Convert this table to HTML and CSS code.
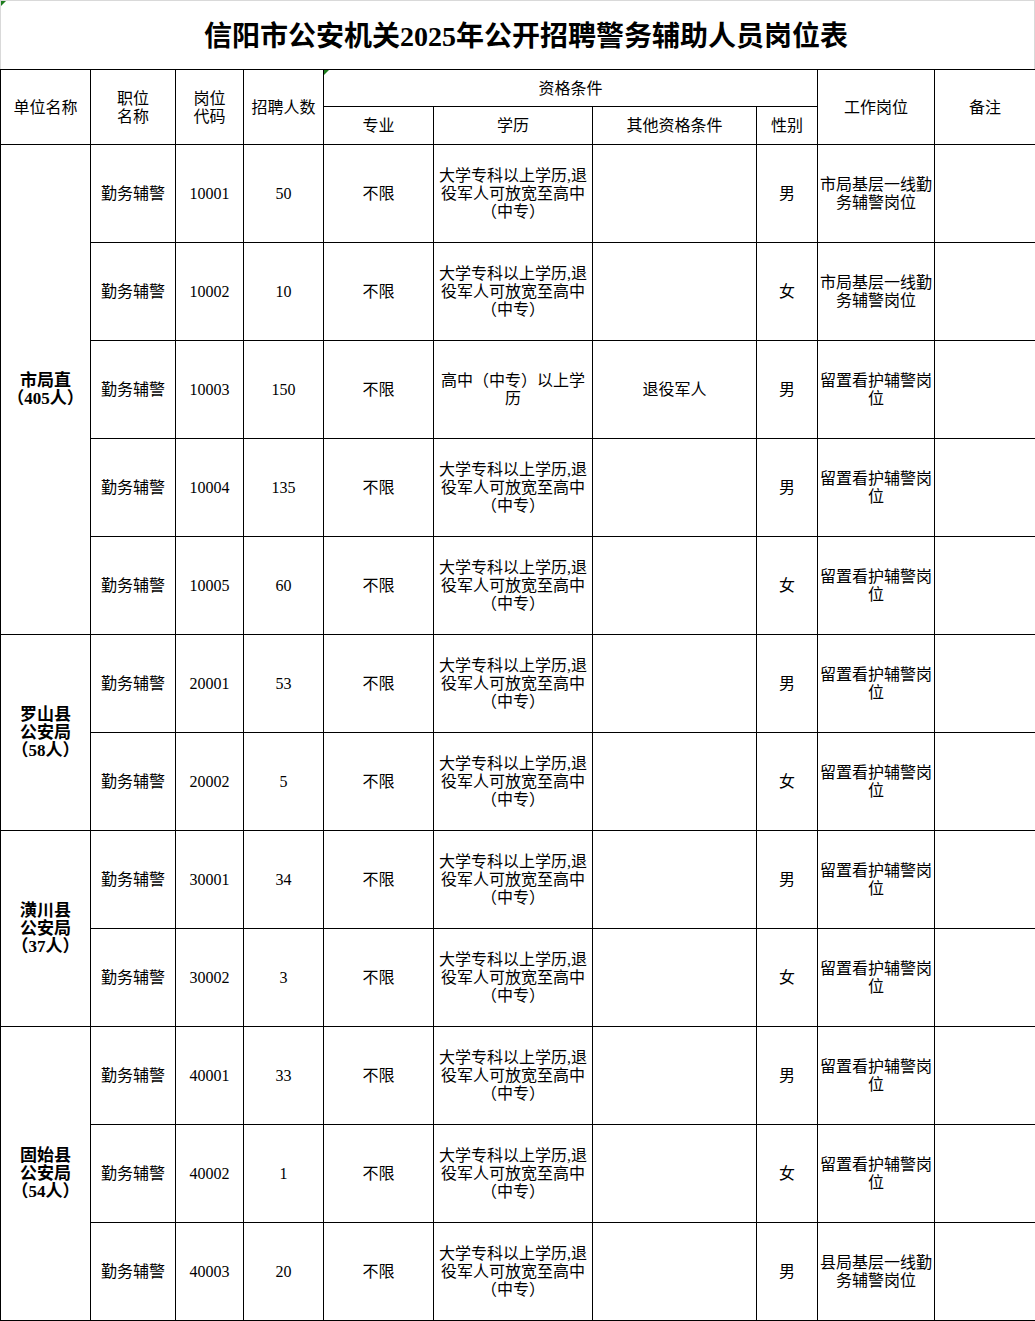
FILE: index.html
```html
<!DOCTYPE html>
<html lang="zh-CN">
<head>
<meta charset="utf-8">
<title>信阳市公安机关2025年公开招聘警务辅助人员岗位表</title>
<link rel="stylesheet" href="styles.css">
</head>
<body>
<div class="sheet">
  <div class="title">
    <span class="mark"></span>
    <h1>信阳市公安机关2025年公开招聘警务辅助人员岗位表</h1>
  </div>
  <table class="grid">
    <colgroup>
      <col class="c1"><col class="c2"><col class="c3"><col class="c4"><col class="c5">
      <col class="c6"><col class="c7"><col class="c8"><col class="c9"><col class="c10">
    </colgroup>
    <thead>
      <tr class="h1row">
        <th rowspan="2">单位名称</th>
        <th rowspan="2">职位<br>名称</th>
        <th rowspan="2">岗位<br>代码</th>
        <th rowspan="2">招聘人数</th>
        <th colspan="4" class="qual"><span class="mark"></span>资格条件</th>
        <th rowspan="2">工作岗位</th>
        <th rowspan="2">备注</th>
      </tr>
      <tr class="h2row">
        <th>专业</th>
        <th>学历</th>
        <th>其他资格条件</th>
        <th>性别</th>
      </tr>
    </thead>
    <tbody>
      <tr>
        <td rowspan="5" class="unit">市局直<br>（405人）</td>
        <td>勤务辅警</td><td>10001</td><td>50</td><td>不限</td>
        <td>大学专科以上学历,退<br>役军人可放宽至高中<br>（中专）</td>
        <td></td><td>男</td><td class="job">市局基层一线勤<br>务辅警岗位</td><td></td>
      </tr>
      <tr>
        <td>勤务辅警</td><td>10002</td><td>10</td><td>不限</td>
        <td>大学专科以上学历,退<br>役军人可放宽至高中<br>（中专）</td>
        <td></td><td>女</td><td class="job">市局基层一线勤<br>务辅警岗位</td><td></td>
      </tr>
      <tr>
        <td>勤务辅警</td><td>10003</td><td>150</td><td>不限</td>
        <td>高中（中专）以上学<br>历</td>
        <td>退役军人</td><td>男</td><td class="job">留置看护辅警岗<br>位</td><td></td>
      </tr>
      <tr>
        <td>勤务辅警</td><td>10004</td><td>135</td><td>不限</td>
        <td>大学专科以上学历,退<br>役军人可放宽至高中<br>（中专）</td>
        <td></td><td>男</td><td class="job">留置看护辅警岗<br>位</td><td></td>
      </tr>
      <tr>
        <td>勤务辅警</td><td>10005</td><td>60</td><td>不限</td>
        <td>大学专科以上学历,退<br>役军人可放宽至高中<br>（中专）</td>
        <td></td><td>女</td><td class="job">留置看护辅警岗<br>位</td><td></td>
      </tr>
      <tr>
        <td rowspan="2" class="unit">罗山县<br>公安局<br>（58人）</td>
        <td>勤务辅警</td><td>20001</td><td>53</td><td>不限</td>
        <td>大学专科以上学历,退<br>役军人可放宽至高中<br>（中专）</td>
        <td></td><td>男</td><td class="job">留置看护辅警岗<br>位</td><td></td>
      </tr>
      <tr>
        <td>勤务辅警</td><td>20002</td><td>5</td><td>不限</td>
        <td>大学专科以上学历,退<br>役军人可放宽至高中<br>（中专）</td>
        <td></td><td>女</td><td class="job">留置看护辅警岗<br>位</td><td></td>
      </tr>
      <tr>
        <td rowspan="2" class="unit">潢川县<br>公安局<br>（37人）</td>
        <td>勤务辅警</td><td>30001</td><td>34</td><td>不限</td>
        <td>大学专科以上学历,退<br>役军人可放宽至高中<br>（中专）</td>
        <td></td><td>男</td><td class="job">留置看护辅警岗<br>位</td><td></td>
      </tr>
      <tr>
        <td>勤务辅警</td><td>30002</td><td>3</td><td>不限</td>
        <td>大学专科以上学历,退<br>役军人可放宽至高中<br>（中专）</td>
        <td></td><td>女</td><td class="job">留置看护辅警岗<br>位</td><td></td>
      </tr>
      <tr>
        <td rowspan="3" class="unit">固始县<br>公安局<br>（54人）</td>
        <td>勤务辅警</td><td>40001</td><td>33</td><td>不限</td>
        <td>大学专科以上学历,退<br>役军人可放宽至高中<br>（中专）</td>
        <td></td><td>男</td><td class="job">留置看护辅警岗<br>位</td><td></td>
      </tr>
      <tr>
        <td>勤务辅警</td><td>40002</td><td>1</td><td>不限</td>
        <td>大学专科以上学历,退<br>役军人可放宽至高中<br>（中专）</td>
        <td></td><td>女</td><td class="job">留置看护辅警岗<br>位</td><td></td>
      </tr>
      <tr>
        <td>勤务辅警</td><td>40003</td><td>20</td><td>不限</td>
        <td>大学专科以上学历,退<br>役军人可放宽至高中<br>（中专）</td>
        <td></td><td>男</td><td class="job">县局基层一线勤<br>务辅警岗位</td><td></td>
      </tr>
    </tbody>
  </table>
</div>
</body>
</html>
```

FILE: styles.css
```css
html, body {
  margin: 0;
  padding: 0;
  background: #ffffff;
}

body {
  font-family: "Liberation Serif", "Noto Sans CJK SC", serif;
  color: #000000;
  font-size: 16px;
}

.sheet {
  width: 1035px;
}

.title {
  position: relative;
  box-sizing: border-box;
  height: 69px;
  border-top: 1px solid #d9d9d9;
  border-left: 1px solid #d9d9d9;
  border-right: 1px solid #d9d9d9;
  display: flex;
  align-items: center;
  justify-content: center;
}

.title h1 {
  margin: 0;
  padding-top: 4px;
  padding-left: 17px;
  font-family: "Liberation Serif", "Noto Sans CJK SC", serif;
  font-size: 28px;
  font-weight: bold;
  line-height: 32px;
}

.mark {
  position: absolute;
  left: 0;
  top: 0;
  width: 0;
  height: 0;
  border-top: 5px solid #1e7d1e;
  border-right: 5px solid transparent;
}

.grid {
  width: 1035px;
  border-collapse: collapse;
  table-layout: fixed;
}

.c1 { width: 90px; }
.c2 { width: 85px; }
.c3 { width: 68px; }
.c4 { width: 80px; }
.c5 { width: 110px; }
.c6 { width: 159px; }
.c7 { width: 164px; }
.c8 { width: 61px; }
.c9 { width: 117px; }
.c10 { width: 101px; }

.grid th,
.grid td {
  border: 1px solid #000000;
  padding: 0;
  text-align: center;
  vertical-align: middle;
  font-weight: normal;
  font-size: 16px;
  line-height: 18px;
  white-space: nowrap;
}

.h1row th { height: 34px; padding-top: 2px; }
.h2row th { height: 36px; padding-top: 1px; }

.qual {
  position: relative;
}

.grid tbody td { height: 97px; }

.grid td.unit {
  font-weight: bold;
  font-size: 17px;
  line-height: 18px;
}
```
